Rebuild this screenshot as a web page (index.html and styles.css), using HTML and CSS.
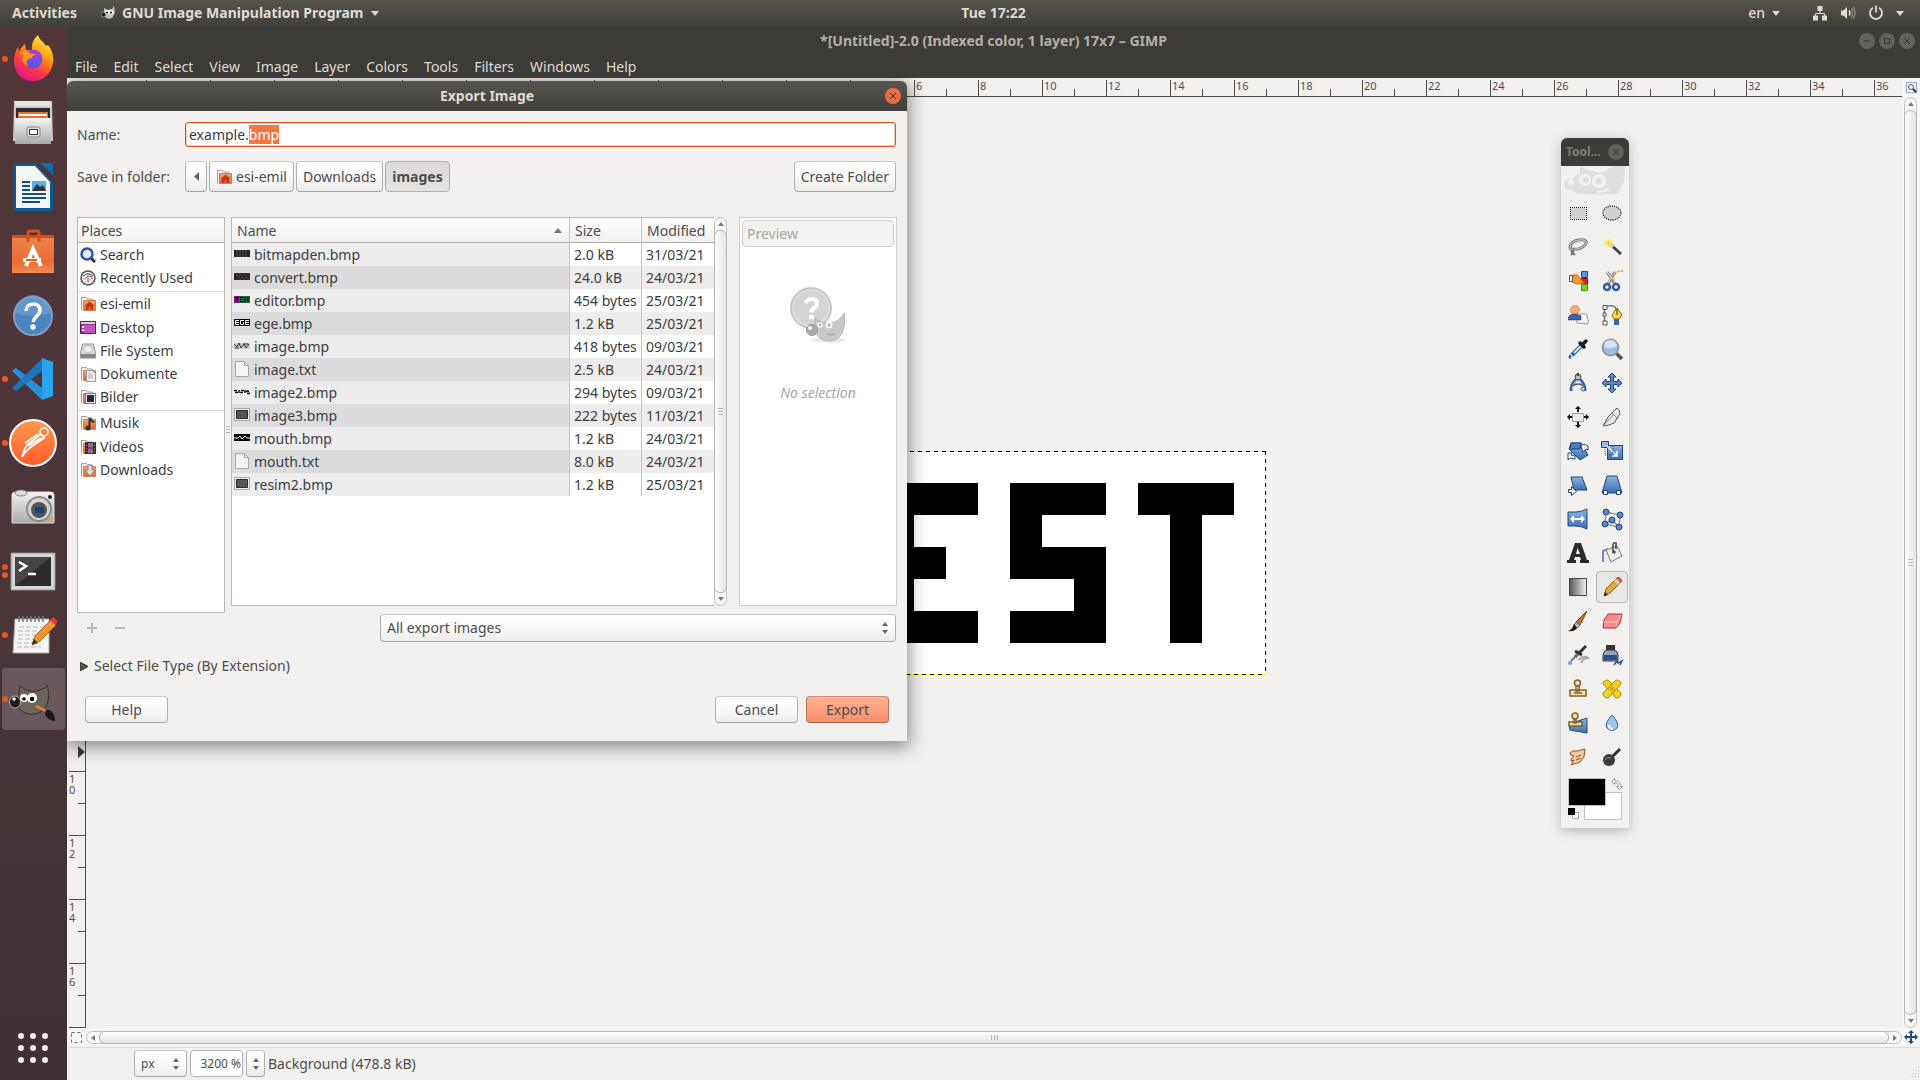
FILE: index.html
```html
<!DOCTYPE html>
<html lang="en">
<head>
<meta charset="utf-8">
<title>GIMP – Export Image</title>
<link rel="stylesheet" href="styles.css">
</head>
<body>
<svg class="defs" aria-hidden="true">
  <defs>
    <linearGradient id="blue" x1="0" y1="0" x2="0" y2="1"><stop offset="0" stop-color="#8fb4e0"/><stop offset="1" stop-color="#3c6db0"/></linearGradient>
    <linearGradient id="orange" x1="0" y1="0" x2="0" y2="1"><stop offset="0" stop-color="#f7a676"/><stop offset="1" stop-color="#e2611f"/></linearGradient>
    <linearGradient id="bag" x1="0" y1="0" x2="0" y2="1"><stop offset="0" stop-color="#e8884f"/><stop offset=".7" stop-color="#ee6b31"/><stop offset="1" stop-color="#f08a55"/></linearGradient>
    <linearGradient id="metal" x1="0" y1="0" x2="0" y2="1"><stop offset="0" stop-color="#f4f4f4"/><stop offset="1" stop-color="#a9a9a9"/></linearGradient>
    <linearGradient id="fade" x1="0" y1="0" x2="1" y2="0"><stop offset="0" stop-color="#555"/><stop offset="1" stop-color="#f4f4f4"/></linearGradient>
    <linearGradient id="fox" x1=".8" y1="0" x2=".3" y2="1"><stop offset="0" stop-color="#fff44f"/><stop offset=".4" stop-color="#ff980e"/><stop offset=".7" stop-color="#ff3647"/><stop offset="1" stop-color="#e31587"/></linearGradient>
    <linearGradient id="globe" x1=".5" y1="0" x2=".4" y2="1"><stop offset="0" stop-color="#b03be0"/><stop offset="1" stop-color="#4a5fe0"/></linearGradient>
    <linearGradient id="post" x1="0" y1="0" x2="0" y2="1"><stop offset="0" stop-color="#ff9a4d"/><stop offset="1" stop-color="#ff5a2a"/></linearGradient>
    <symbol id="folder" viewBox="0 0 16 16"><path d="M1.500 14.500v-13h5l1 1.500h5v3" fill="#f3f3f2" stroke="#a3a19e"/><path d="M3.500 4.500h12v10h-12z" fill="url(#orange)" stroke="#dc7a50"/></symbol>
    <symbol id="home" viewBox="0 0 16 16"><use href="#folder"/><path d="M9.500 5.500l-5 4.500h1.500v4h2.500v-2.500h2V14H13v-4h1.500z" fill="#bf3a14"/></symbol>
    <symbol id="sheet" viewBox="0 0 16 16"><path d="M1.500.5h9l4 4v11h-13z" fill="#f4f4f3" stroke="#a8a6a3"/><path d="M10.500.5v4h4z" fill="#fff" stroke="#a8a6a3"/></symbol>
    <symbol id="picture" viewBox="0 0 16 16"><path d="M.5 1.500h15v12H.5z" fill="#eee" stroke="#a8a6a3"/><path d="M2.500 3.500h11v8h-11z" fill="#555" stroke="#2b2b2b"/></symbol>
  </defs>
</svg>

<header class="topbar">
  <div class="topbar-left">
    <button class="plain">Activities</button>
    <button class="plain app-menu">
      <svg width="14" height="14" viewBox="0 0 14 14"><path d="M3 2l4 2 4-1 2-3 1 7-3 5q-5 2-8-2z" fill="#c4c3bd"/><circle cx="2.500" cy="8.500" r="2.500" fill="#222" stroke="#ddd" stroke-width=".5"/><circle cx="6" cy="6" r="2" fill="#fff"/><circle cx="10" cy="6" r="2.200" fill="#fff"/><circle cx="6" cy="6.500" r="1"/><circle cx="10" cy="6.500" r="1"/></svg>
      GNU Image Manipulation Program
      <i class="caret"></i>
    </button>
  </div>
  <time class="clock">Tue 17:22</time>
  <div class="topbar-right">
    <button class="plain lang">en <i class="caret"></i></button>
    <button class="plain status" aria-label="System menu">
      <svg width="16" height="16" viewBox="0 0 16 16"><path d="M5.500 1h5v5h-5zM1 10.500h5v5H1zM10 10.500h5v5h-5z" fill="#dfdbd2"/><path d="M8 5v3.500M3.500 11V8.500h9V11" stroke="#dfdbd2" fill="none"/></svg>
      <svg width="16" height="16" viewBox="0 0 16 16"><path d="M1 5.500h2.500L7 2v12l-3.500-3.500H1z" fill="#dfdbd2"/><path d="M9 5.500q2 2.500 0 5" stroke="#dfdbd2" stroke-width="1.500" fill="none"/><path d="M11 3.500q3.500 4.500 0 9M13 2q4 6 0 12" stroke="#85827b" stroke-width="1.500" fill="none"/></svg>
      <svg width="16" height="16" viewBox="0 0 16 16"><path d="M5 2.800a6 6 0 1 0 6 0M8 .5v7" stroke="#dfdbd2" stroke-width="1.800" fill="none"/></svg>
      <i class="caret"></i>
    </button>
  </div>
</header>

<div class="desktop">
<nav class="dock" aria-label="Dock">
  <button class="dock-item run1" aria-label="Firefox"><svg width="48" height="48" viewBox="0 0 48 48"><path d="M24 46C11 46 5 36 5 26c0-6 2-11 4-14l1 5c1-3 3-6 6-8l1 6 6 0C22 7 26 3 29 0c2 6 6 7 8 11l2-1c5 6 6 13 5 18-2 11-10 18-20 18z" fill="url(#fox)"/><circle cx="24" cy="24" r="9.500" fill="url(#globe)"/><path d="M11 18c3-3 8-2 11 1h6c-3 1-5 2-5 4-5 0-7 4-4 8-6-2-7-8-4-10z" fill="#ff9a1f"/></svg></button>
  <button class="dock-item" aria-label="Files"><svg width="48" height="48" viewBox="0 0 48 48"><path d="M5 2h38l1 40H4z" fill="#c9c9c8"/><path d="M6 2h36v5H6z" fill="#e6e6e5"/><path d="M7 9h34v14H7z" fill="#2e2b2a"/><path d="M9 13h30v8H9z" fill="#e8702f"/><path d="M10 15h28v2H10z" fill="#fff"/><path d="M6 19h36v26H6z" fill="url(#metal)"/><rect x="18" y="28" width="13" height="10" rx="2" fill="#ddd" stroke="#8b8b8b"/><path d="M20.500 30.500h8v5h-8z" fill="#fff" stroke="#333"/></svg></button>
  <button class="dock-item" aria-label="LibreOffice Writer"><svg width="48" height="48" viewBox="0 0 48 48"><path d="M42 48q2 0 2-2V20L26 0H8Q4 0 4 3v42q0 3 3 3z" fill="#0b5e93"/><path d="M7 3h19l15 16v26H7z" fill="#f4f4f3"/><path d="M13 19h8M13 23h8M13 27h8M13 31h24M13 35h24M13 39h18" stroke="#0d4f7d" stroke-width="2"/><path d="M23 18h14v10H23z" fill="#56b0e8"/><path d="M23 28l5-7 3 3 3-2 3 6z" fill="#333"/><path d="M31 0h11q2 0 2 2v10z" fill="#0a6fae"/></svg></button>
  <button class="dock-item" aria-label="Ubuntu Software"><svg width="48" height="48" viewBox="0 0 48 48"><path d="M3 8h42v38H3z" fill="url(#bag)"/><path d="M3 8h42v3H3z" fill="#d9491a"/><path d="M19 15V6q0-2 2-2h7q2 0 2 2v9" fill="none" stroke="#dc4c1d" stroke-width="3"/><path d="M17 39l7-17 8 17M14 33h18" stroke="#fff" stroke-width="4" fill="none"/><path d="M17 33h11" stroke="#e8601f" stroke-width="2"/></svg></button>
  <button class="dock-item" aria-label="Help"><svg width="48" height="48" viewBox="0 0 48 48"><circle cx="24" cy="25" r="19" fill="#4a86bd" stroke="#7f9fc4" stroke-width="2"/><path d="M6 22a18 18 0 0 1 36 0q-18 6-36 0z" fill="#75a3d6" opacity=".6"/><path d="M17 20c0-9 14-9 14-1 0 6-6 6-7 12" stroke="#fff" stroke-width="3.500" fill="none"/><circle cx="24" cy="36" r="2.700" fill="#fff"/></svg></button>
  <button class="dock-item run1" aria-label="Visual Studio Code"><svg width="48" height="48" viewBox="0 0 48 48"><path d="M3 16l4-3 26 20v12z" fill="#2a8fd6"/><path d="M3 33l4 3 26-20V4z" fill="#1c76b9"/><path d="M33 3l11 4v34l-11 4z" fill="#2ba4ee"/></svg></button>
  <button class="dock-item run1" aria-label="Postman"><svg width="48" height="48" viewBox="0 0 48 48"><circle cx="24" cy="24" r="23" fill="url(#post)" stroke="#fff" stroke-width="2"/><circle cx="35" cy="13" r="4" fill="none" stroke="#fff" stroke-width="1.500"/><path d="M18 26l14-11 3 4-13 9-5 4-4 6 2-7zM16 24l13-9M19 27l13-8" fill="none" stroke="#fff" stroke-width="1.800"/></svg></button>
  <button class="dock-item" aria-label="Shotwell"><svg width="48" height="48" viewBox="0 0 48 48"><path d="M3 12q0-3 3-3h36q3 0 3 3v28H3z" fill="url(#metal)" stroke="#ddd"/><ellipse cx="12" cy="10" rx="6" ry="3" fill="#ddd" stroke="#888"/><circle cx="30" cy="26" r="12" fill="#d5d5d5" stroke="#8a8a8a" stroke-width="2"/><circle cx="30" cy="27" r="8" fill="#555"/><path d="M26 24h9v6h-9z" fill="#153f86"/><circle cx="41" cy="14" r="2" fill="#222"/><path d="M39 34h4v3h-4z" fill="#e9a227"/></svg></button>
  <button class="dock-item run2" aria-label="Terminal"><svg width="48" height="48" viewBox="0 0 48 48"><path d="M2 6h44v37H2z" fill="#d6d6d4" stroke="#8f8f8c"/><path d="M6 10h36v29H6z" fill="#2c2c2b"/><path d="M6 39V10h36z" fill="#454544"/><path d="M10 15l7 4-7 5" stroke="#fff" stroke-width="2.500" fill="none"/><path d="M19 27h8" stroke="#fff" stroke-width="2.500"/></svg></button>
  <button class="dock-item run1" aria-label="Text Editor"><svg width="48" height="48" viewBox="0 0 48 48"><path d="M6 8h34v34H4z" fill="#f4f4f2" stroke="#aaa"/><path d="M10 5v6M14 5v6M18 5v6M22 5v6M26 5v6M30 5v6M34 5v6" stroke="#777" stroke-width="1.500"/><path d="M10 16h24M9 20h20M9 24h18M9 28h16M8 32h18M8 36h24" stroke="#b5b5b3" stroke-dasharray="5 2"/><path d="M23 34l3-9L42 9l5 5-16 16z" fill="#f0942d" stroke="#a8601a"/><path d="M23 34l2-6 4 4z" fill="#333"/><path d="M41 9l3-3 5 4-3 4z" fill="#dd3a3a"/></svg></button>
  <button class="dock-item run1 active" aria-label="GIMP"><svg width="48" height="48" viewBox="0 0 48 48"><path d="M11 11c6 5 13 7 20 4 4-1 6-3 7-5 4 12 1 29-15 29-9 0-13-4-14-10z" fill="#6b6658" stroke="#35322a"/><ellipse cx="6" cy="27" rx="5.500" ry="6" fill="#1b1b1b" stroke="#ddd" stroke-width=".7"/><circle cx="5" cy="24" r="1.800" fill="#fff"/><circle cx="15" cy="23" r="4" fill="#fff"/><circle cx="23" cy="23" r="5" fill="#fff"/><circle cx="15" cy="24" r="1.800"/><circle cx="23" cy="24" r="2.300"/><path d="M27 31l12 6" stroke="#d9822b" stroke-width="3"/><path d="M37 35c5-1 9 4 9 11-5 0-10-4-10-8z" fill="#171717"/></svg></button>
  <button class="dock-apps" aria-label="Show Applications"><svg width="30" height="30" viewBox="0 0 30 30" fill="#f2f1f0"><circle cx="3" cy="3" r="3"/><circle cx="15" cy="3" r="3"/><circle cx="27" cy="3" r="3"/><circle cx="3" cy="15" r="3"/><circle cx="15" cy="15" r="3"/><circle cx="27" cy="15" r="3"/><circle cx="3" cy="27" r="3"/><circle cx="15" cy="27" r="3"/><circle cx="27" cy="27" r="3"/></svg></button>
</nav>

<main class="gimp">
  <div class="titlebar">
    <h1 class="title">*[Untitled]-2.0 (Indexed color, 1 layer) 17x7 – GIMP</h1>
    <div class="winbtns">
      <button class="winbtn" aria-label="Minimize"><svg width="8" height="8"><path d="M1 4h6"/></svg></button>
      <button class="winbtn" aria-label="Maximize"><svg width="8" height="8"><path d="M1.500 1.500h5v5h-5z"/></svg></button>
      <button class="winbtn" aria-label="Close"><svg width="8" height="8"><path d="M1 1l6 6M7 1L1 7"/></svg></button>
    </div>
  </div>
  <nav class="menubar">
    <button class="plain">File</button><button class="plain">Edit</button><button class="plain">Select</button><button class="plain">View</button><button class="plain">Image</button><button class="plain">Layer</button><button class="plain">Colors</button><button class="plain">Tools</button><button class="plain">Filters</button><button class="plain">Windows</button><button class="plain">Help</button>
  </nav>

  <div class="editor">
    <div class="corner"></div>
    <div class="hruler"><span>6</span><span>8</span><span>10</span><span>12</span><span>14</span><span>16</span><span>18</span><span>20</span><span>22</span><span>24</span><span>26</span><span>28</span><span>30</span><span>32</span><span>34</span><span>36</span></div>
    <button class="corner-btn" aria-label="Zoom image when window size changes"><svg width="11" height="11" viewBox="0 0 11 11" fill="none"><path d="M.5.500h10v10H.5z" stroke="#2c5a96" stroke-dasharray="1 1"/><circle cx="5" cy="5" r="2.500" stroke="#555"/><path d="M7 7l3 3" stroke="#333" stroke-width="2"/></svg></button>
    <div class="vruler"><span>1<br>0</span><span>1<br>2</span><span>1<br>4</span><span>1<br>6</span><svg class="marker" width="7" height="12"><path d="M0 0l7 6-7 6z" fill="#3c3c3c"/></svg></div>
    <div class="canvas">
      <div class="image"><svg width="544" height="224" viewBox="0 0 17 7" shape-rendering="crispEdges"><path d="M0 0h17v7H0z" fill="#fff"/><path d="M1 1h3v1H3v4H2V2H1zM5 1h3v1H6v1h1v1H6v1h2v1H5zM9 1h3v1h-2v1h2v3H9V5h2V4H9zM13 1h3v1h-1v4h-1V2h-1z"/></svg></div>
    </div>
    <div class="scroll v"><i class="up"></i><div class="thumb"><b></b></div><i class="down"></i></div>
    <button class="corner-btn" aria-label="Toggle quick mask"><svg width="11" height="11"><path d="M.5.500h10v10H.5z" fill="none" stroke="#666" stroke-dasharray="3 3"/></svg></button>
    <div class="scroll h"><i class="left"></i><div class="thumb"><b></b></div><i class="right"></i></div>
    <button class="corner-btn" aria-label="Navigate image"><svg width="14" height="14" viewBox="0 0 14 14" fill="#204a87"><path d="M7 0l3 3H8v3h3V4l3 3-3 3V8H8v3h2l-3 3-3-3h2V8H3v2L0 7l3-3v2h3V3H4z"/></svg></button>
  </div>

  <footer class="statusbar">
    <div class="combo unit"><select aria-label="Unit"><option>px</option></select><svg class="updown" width="6" height="12"><path d="M0 4l3-4 3 4zM0 8l3 4 3-4z"/></svg></div>
    <input class="zoom" type="text" value="3200 %" aria-label="Zoom">
    <button class="btn spin" aria-label="Zoom steps"><svg width="6" height="12"><path d="M0 4l3-4 3 4zM0 8l3 4 3-4z"/></svg></button>
    <span>Background (478.8 kB)</span>
    <svg class="grip" width="12" height="12" fill="#bbb"><path d="M10 0h1v1h-1zM7 3h1v1H7zM10 3h1v1h-1zM4 6h1v1H4zM7 6h1v1H7zM10 6h1v1h-1zM1 9h1v1H1zM4 9h1v1H4zM7 9h1v1H7zM10 9h1v1h-1z"/></svg>
  </footer>

  <section class="dialog" role="dialog" aria-labelledby="dlg-title">
    <header class="dialog-title"><h2 id="dlg-title">Export Image</h2><button class="winbtn close" aria-label="Close"><svg width="8" height="8"><path d="M1 1l6 6M7 1L1 7"/></svg></button></header>
    <form class="dialog-body" onsubmit="return false">
      <div class="row">
        <label class="lbl" for="fname">Name:</label>
        <input id="fname" class="fname" type="text" value="example.bmp" autofocus>
      </div>
      <div class="row folder-row">
        <span class="lbl">Save in folder:</span>
        <div class="crumbs">
          <button type="button" class="btn back" aria-label="Back"><svg width="5" height="9"><path d="M5 0v9L0 4.500z" fill="#666"/></svg></button>
          <button type="button" class="btn"><svg width="16" height="16"><use href="#home"/></svg>esi-emil</button>
          <button type="button" class="btn">Downloads</button>
          <button type="button" class="btn pressed">images</button>
        </div>
        <button type="button" class="btn">Create Folder</button>
      </div>

      <div class="browser">
        <div class="side">
          <div class="places">
            <div class="head">Places</div>
            <ul>
              <li><svg width="16" height="16"><path d="M10 10l5 5" stroke="#333" stroke-width="3"/><circle cx="7" cy="7" r="5.500" fill="#e6eefa" stroke="#2f4fa8" stroke-width="2.500"/></svg>Search</li>
              <li><svg width="16" height="16" fill="none"><circle cx="8" cy="8" r="7" fill="#eee" stroke="#555" stroke-width="1.500"/><circle cx="8" cy="8" r="4.500" stroke="#999" stroke-dasharray="1 2"/><path d="M3 6q5-4 10 0M8 8v4" stroke="#555"/><path d="M5 9l3-3 4 1" stroke="#c33"/></svg>Recently Used</li>
              <li class="sep"><svg width="16" height="16"><use href="#home"/></svg>esi-emil</li>
              <li><svg width="16" height="16"><path d="M.5 1.500h15v12H.5z" fill="#a22fa0" stroke="#5c1a5a"/><path d="M4 5h11v8H4z" fill="#c055bd"/><path d="M1 2h14v2H1z" fill="#d8d4c0"/><path d="M2 6h2v2H2zM2 9h2v2H2z" fill="#fff"/></svg>Desktop</li>
              <li><svg width="16" height="16"><path d="M2.500 1h11l2 9v5H.5v-5z" fill="#d9d9d8" stroke="#999"/><ellipse cx="8" cy="6" rx="4.500" ry="3.500" fill="#eee" stroke="#bbb"/><path d="M1 11h14v4H1z" fill="#888"/></svg>File System</li>
              <li><svg width="16" height="16"><use href="#folder"/><path d="M6.500 4.500h6l3 3v8h-9z" fill="#eee" stroke="#999"/><path d="M8 8h4M8 10h5M8 12h5" stroke="#aaa"/></svg>Dokumente</li>
              <li><svg width="16" height="16"><use href="#folder"/><path d="M5.500 4.500h10v10h-10z" fill="#eee" stroke="#777"/><path d="M7 6h7v7H7z" fill="#2c2640"/></svg>Bilder</li>
              <li class="sep"><svg width="16" height="16"><use href="#folder"/><path d="M9.500 13V3q2 4 5 4" fill="none" stroke="#333" stroke-width="2"/><circle cx="8" cy="13" r="2.500" fill="#333"/></svg>Musik</li>
              <li><svg width="16" height="16"><use href="#folder"/><path d="M5 3h11v12H5z" fill="#352d38"/><path d="M8 4h5v4.500H8zM8 9.500h5V14H8z" fill="#8f6c9a"/><path d="M6.500 3v12M14.500 3v12" stroke="#c96a3c" stroke-dasharray="1 2"/></svg>Videos</li>
              <li><svg width="16" height="16"><use href="#folder"/><path d="M8 3h4v5h3l-5 6-5-6h3z" fill="#ddd" stroke="#888"/></svg>Downloads</li>
            </ul>
          </div>
          <div class="side-tools">
            <button type="button" class="plain" aria-label="Add bookmark"><svg width="10" height="10"><path d="M4 0h2v4h4v2H6v4H4V6H0V4h4z" fill="#b9b8b6"/></svg></button>
            <button type="button" class="plain" aria-label="Remove bookmark"><svg width="10" height="10"><path d="M0 4h10v2H0z" fill="#b9b8b6"/></svg></button>
          </div>
        </div>
        <div class="pane-grip"><b class="bars"></b></div>
        <div class="files">
          <div class="lists">
            <div class="table-box">
              <table>
                <thead><tr><th class="c-name">Name<svg width="8" height="5"><path d="M4 0l4 5H0z" fill="#777"/></svg></th><th class="c-size">Size</th><th class="c-mod">Modified</th></tr></thead>
                <tbody>
                  <tr><td><svg width="16" height="16"><path d="M0 4h16v7H0z" fill="#222"/><path d="M3 4v7M6 4v7M9 4v7M12 4v7" stroke="#555"/></svg>bitmapden.bmp</td><td>2.0 kB</td><td>31/03/21</td></tr>
                  <tr><td><svg width="16" height="16"><path d="M0 4h16v7H0z" fill="#2a2338"/><path d="M1 4l6 7M5 4l6 7M9 4l6 7" stroke="#6a3d2c"/></svg>convert.bmp</td><td>24.0 kB</td><td>24/03/21</td></tr>
                  <tr><td><svg width="16" height="16"><path d="M0 4h16v7H0z" fill="#1f6c42"/><path d="M0 4h5v7H0z" fill="#7a1580"/><path d="M1 5.500h4M3 5v4M6 5.500h3M6 7.500h2M6 9.500h3M11 5v5M13 5.500h2M14 5v5" stroke="#000"/></svg>editor.bmp</td><td>454 bytes</td><td>25/03/21</td></tr>
                  <tr><td><svg width="16" height="16" fill="none"><path d="M0 4h16v7H0z" fill="#000"/><path d="M5 5.500H1.500v4H5M2 7.500h3M10 5.500H6.500v4h3V7M15 5.500h-3.500v4H15M12 7.500h3" stroke="#fff"/></svg>ege.bmp</td><td>1.2 kB</td><td>25/03/21</td></tr>
                  <tr><td><svg width="16" height="16" fill="none"><path d="M0 5h16v6H0z" fill="#ccc"/><path d="M0 6l3 3 2-4 2 5 3-4 2 4 3-4M1 10h4M9 6h5" stroke="#333"/></svg>image.bmp</td><td>418 bytes</td><td>09/03/21</td></tr>
                  <tr><td><svg width="16" height="16"><use href="#sheet"/></svg>image.txt</td><td>2.5 kB</td><td>24/03/21</td></tr>
                  <tr><td><svg width="16" height="16" fill="none"><path d="M0 5h16v6H0z" fill="#fff"/><path d="M0 6.500h3M1 8.500h3M5 6v3M7 6.500h3M6 8.500h3M11 6v3M12 7.500h3M13 9.500h3M14 6v1" stroke="#111" stroke-width="1.500"/></svg>image2.bmp</td><td>294 bytes</td><td>09/03/21</td></tr>
                  <tr><td><svg width="16" height="16"><use href="#picture"/></svg>image3.bmp</td><td>222 bytes</td><td>11/03/21</td></tr>
                  <tr><td><svg width="16" height="16" fill="none"><path d="M0 4h16v7H0z" fill="#000"/><path d="M0 8h4l2-2 2 3 3-3 2 2h3" stroke="#fff"/></svg>mouth.bmp</td><td>1.2 kB</td><td>24/03/21</td></tr>
                  <tr><td><svg width="16" height="16"><use href="#sheet"/></svg>mouth.txt</td><td>8.0 kB</td><td>24/03/21</td></tr>
                  <tr><td><svg width="16" height="16"><use href="#picture"/></svg>resim2.bmp</td><td>1.2 kB</td><td>25/03/21</td></tr>
                </tbody>
              </table>
            </div>
            <div class="scroll v"><i class="up"></i><div class="thumb"><b></b></div><i class="down"></i></div>
            <div class="preview">
              <button type="button" class="btn" disabled>Preview</button>
              <svg width="56" height="56" viewBox="0 0 56 56"><ellipse cx="38" cy="53" rx="17" ry="3" fill="#000" opacity=".08"/><circle cx="21" cy="21" r="20" fill="#dcddde" stroke="#c6c7c8" stroke-width="2"/><circle cx="21" cy="21" r="17" fill="#d2d4d6"/><path d="M16 16q1-4 6-4 5 0 5 4.500 0 3-3 4.500-2.500 1.500-2.500 4.500" fill="none" stroke="#fff" stroke-width="4"/><path d="M19 28h5v4h-5z" fill="#fff"/><path d="M25 31q7 6 14 5 10 0 15-10c2 14-1 27-14 28-9 0-14-5-15-12z" fill="#c9c9c9" stroke="#b5b5b5"/><circle cx="22" cy="43" r="5.500" fill="#aaa" stroke="#999"/><circle cx="20" cy="41" r="2" fill="#f4f4f4"/><circle cx="30" cy="38" r="2.800" fill="#f6f6f6"/><circle cx="39" cy="38" r="3.500" fill="#f6f6f6"/><circle cx="30" cy="38" r="1.200" fill="#aaa"/><circle cx="39" cy="38" r="1.500" fill="#aaa"/><path d="M37 47q5 2 8 0" stroke="#999" fill="none"/></svg>
              <em>No selection</em>
            </div>
          </div>
          <div class="combo filter"><select aria-label="File filter"><option>All export images</option></select><svg class="updown" width="6" height="12"><path d="M0 4l3-4 3 4zM0 8l3 4 3-4z"/></svg></div>
        </div>
      </div>

      <button type="button" class="plain expander" aria-expanded="false"><svg width="8" height="9"><path d="M0 0l8 4.500L0 9z" fill="#555" stroke="#333"/></svg>Select File Type (By Extension)</button>
      <div class="actions">
        <button type="button" class="btn">Help</button>
        <button type="button" class="btn cancel">Cancel</button>
        <button type="submit" class="btn primary">Export</button>
      </div>
    </form>
  </section>

  <aside class="toolbox" aria-label="Toolbox">
    <header class="toolbox-title"><h2>Tool...</h2><button class="winbtn" aria-label="Close"><svg width="8" height="8"><path d="M1 1l6 6M7 1L1 7"/></svg></button></header>
    <svg width="68" height="28" viewBox="0 0 68 28"><path d="M19 0v8q-4 0-6 4-10 0-10 7 1 6 8 5 4 4 12 4h33q9-10 8-28h-13q-6 8-16 6-10-2-16-6z" fill="#dfdfde"/><circle cx="10" cy="16" r="3" fill="#f2f1f0"/><circle cx="24" cy="14" r="6" fill="#f2f1f0"/><circle cx="38" cy="15" r="7" fill="#f2f1f0"/><circle cx="25" cy="14" r="3" fill="#dfdfde"/><circle cx="38" cy="15" r="3.500" fill="#dfdfde"/><path d="M36 26q10 0 12-4" stroke="#f2f1f0" stroke-width="2" fill="none"/></svg>
    <div class="tools">
      <button aria-label="Rectangle Select"><svg viewBox="0 0 24 24" shape-rendering="crispEdges"><path d="M4.500 6.500h16v12h-16z" fill="#d0d2cd" stroke="#fff"/><path d="M4 6.500h17M4 18.500h17M4.500 6v13M20.500 6v13" fill="none" stroke="#111" stroke-dasharray="1 1"/></svg></button>
      <button aria-label="Ellipse Select"><svg viewBox="0 0 24 24"><ellipse cx="12" cy="12" rx="9" ry="7" fill="#d0d2cd" stroke="#fff"/><ellipse cx="12" cy="12" rx="9" ry="7" fill="none" stroke="#111" stroke-width="1.300" stroke-dasharray="1.200 1"/></svg></button>
      <button aria-label="Free Select"><svg viewBox="0 0 24 24" fill="none"><path d="M6 15c-4-3-1-9 7-10 7-1 9 2 6 5s-8 5-13 4" stroke="#777" stroke-width="3"/><path d="M6 15c-4-3-1-9 7-10 7-1 9 2 6 5s-8 5-13 4" stroke="#ddd"/><path d="M7 14q1 3-2 6M5 16l4 4" stroke="#777" stroke-width="2"/></svg></button>
      <button aria-label="Fuzzy Select"><svg viewBox="0 0 24 24"><circle cx="9" cy="8" r="5" fill="#fbf08a" opacity=".8"/><path d="M9 5v6M6 8h6" stroke="#e6cf1d"/><path d="M11 10l10 9" stroke="#444" stroke-width="3"/><path d="M11 10l2 2" stroke="#ddd" stroke-width="3"/></svg></button>
      <button aria-label="Select by Color"><svg viewBox="0 0 24 24"><path d="M15.500 2.500h6v6h-6z" fill="#5b94d6" stroke="#204a87"/><path d="M15.500 9.500h6v6h-6z" fill="#e02020" stroke="#900"/><path d="M15.500 15.500h6v6h-6z" fill="#7ad01f" stroke="#4e9a06"/><path d="M6 6h5l3 3 4 5-7 1-5-2z" fill="#f9972b" stroke="#c9600a"/><path d="M3.500 6.500h3v6h-3z" fill="#fff" stroke="#555"/></svg></button>
      <button aria-label="Scissors Select"><svg viewBox="0 0 24 24" fill="none"><path d="M8 15L15 3M15 15L7 3" stroke="#888" stroke-width="3"/><path d="M8 14L15 3M15 14L7 3" stroke="#eee"/><path d="M13 15V7q1-5 10-5" stroke="#d9932a" stroke-width="1.500" stroke-dasharray="2 1"/><circle cx="7" cy="18" r="3" stroke="#2f5da1" stroke-width="2.500"/><circle cx="16" cy="18" r="3" stroke="#2f5da1" stroke-width="2.500"/></svg></button>
      <button aria-label="Foreground Select"><svg viewBox="0 0 24 24"><path d="M11 20q-1-5 3-5l1-4q7-2 6 4 2 1 1 6z" fill="#f6f6f6" stroke="#999"/><circle cx="9" cy="7" r="4.500" fill="#f2b06b" stroke="#b3621a" stroke-dasharray="1 1"/><path d="M2.500 17v-3q1-3 6.500-3t6 3v3z" fill="#3b62a8" stroke="#4b145a" stroke-dasharray="1 1"/></svg></button>
      <button aria-label="Paths"><svg viewBox="0 0 24 24" fill="none"><path d="M4.500 4v16M5 4q10-4 12 4" stroke="#777" stroke-width="1.500"/><path d="M3 2.500h4v4H3zM3 10h3v3H3zM3 18h4v4H3z" fill="#fff" stroke="#555"/><path d="M17 5l5 7-3 4h-5l-2-4z" fill="#f7d84b" stroke="#8f6d00"/><path d="M17 6v6" stroke="#333"/><path d="M14 16h5v6h-5z" fill="#3465a4"/></svg></button>
      <button aria-label="Color Picker"><svg viewBox="0 0 24 24"><path d="M15 9L6 18" stroke="#2d5f9e" stroke-width="4"/><path d="M15 9l-7 7" stroke="#d6e4f5" stroke-width="2"/><path d="M14 6l4 4M16 8l4-4" stroke="#1c1c1c" stroke-width="3.500" stroke-linecap="round"/><path d="M4 17q-3 4 0 5 3-1 0-5z" fill="#3566a8"/></svg></button>
      <button aria-label="Zoom"><svg viewBox="0 0 24 24"><path d="M16 16l6 6" stroke="#555" stroke-width="3.500"/><circle cx="10.500" cy="10.500" r="8" fill="#9dbfe6" stroke="#989898" stroke-width="2"/><path d="M4 10q6 3 13-1-1-6-7-6t-6 7z" fill="#d3e2f4"/></svg></button>
      <button aria-label="Measure"><svg viewBox="0 0 24 24" fill="none"><path d="M11 8Q5 12 5 20M13 8q6 4 6 12" stroke="#2f5f9f" stroke-width="3"/><path d="M11 9Q6 13 6 18M13 9q5 4 5 9" stroke="#a9c4e6"/><path d="M6 15q6-4 12 0" stroke="#555" stroke-width="1.500"/><circle cx="12" cy="6" r="3" fill="#bbb" stroke="#444"/><circle cx="17" cy="18" r="2" fill="#ddd" stroke="#2f5f9f"/><path d="M12 2v3" stroke="#444" stroke-width="2"/></svg></button>
      <button aria-label="Move"><svg viewBox="0 0 24 24"><path d="M12 2l4 4h-2.500v4.500H18V8l4 4-4 4v-2.500h-4.500V18H16l-4 4-4-4h2.500v-4.500H6V16l-4-4 4-4v2.500h4.500V6H8z" fill="#5b87c3" stroke="#1d467f"/></svg></button>
      <button aria-label="Align"><svg viewBox="0 0 24 24"><path d="M6.500 8.500h11v8h-11z" fill="#eee" stroke="#999"/><path d="M12 1l3 3h-2v3h-2V4H9zM12 23l3-3h-2v-3h-2v3H9zM1 12l3-3v2h2v2H4v2zM23 12l-3-3v2h-2v2h2v2z"/></svg></button>
      <button aria-label="Crop"><svg viewBox="0 0 24 24"><path d="M3 21l5-9 9-9q3 2 3 6l-6 9-5 2z" fill="#e8e8e8" stroke="#555"/><path d="M3 21l10-11M12 8l5 5" stroke="#888" fill="none"/></svg></button>
      <button aria-label="Rotate"><svg viewBox="0 0 24 24"><path d="M5 4h10l7 12-8 5L3 10z" fill="url(#blue)" stroke="#1d467f"/><path d="M5 4l-1 6h10l1-6z" fill="#4a7ec0" stroke="#1d467f"/><path d="M15 7l3-2 4 2v4l-2-1-3 3zM2 14h4l-1 2 4 1v3l-5-1-2 2z" fill="#fff" stroke="#1d467f"/></svg></button>
      <button aria-label="Scale"><svg viewBox="0 0 24 24"><path d="M7.500 6.500h15v14h-15z" fill="url(#blue)" stroke="#1d467f"/><path d="M1.500 2.500h7v6h-7z" fill="#9cbce6" stroke="#1d467f"/><path d="M7 7l9 9M17 12v5h-5" fill="none" stroke="#fff" stroke-width="1.500"/><path d="M5 10v6h8V6" fill="none" stroke="#1d467f" stroke-dasharray="1 1"/></svg></button>
      <button aria-label="Shear"><svg viewBox="0 0 24 24"><path d="M5 4h11l5 13H8z" fill="url(#blue)" stroke="#1d467f"/><path d="M2.500 16.500h3v-3l5 5-5 4v-3h-3z" fill="#fff" stroke="#1d467f"/></svg></button>
      <button aria-label="Perspective"><svg viewBox="0 0 24 24"><path d="M7 3h10l5 17H2z" fill="url(#blue)" stroke="#1d467f"/><path d="M3.500 17.500h4v4h-4zM16.500 17.500h4v4h-4z" fill="#fff" stroke="#1d467f"/></svg></button>
      <button aria-label="Flip"><svg viewBox="0 0 24 24"><path d="M2 5h8q5 0 11-3v20q-6-3-11-3H2z" fill="url(#blue)" stroke="#1d467f"/><path d="M4 12l4-4v3h7V8l4 4-4 4v-3H8v3z" fill="#fff"/></svg></button>
      <button aria-label="Cage Transform"><svg viewBox="0 0 24 24"><path d="M6 5l14 3-1 12-14-3zM5 17l7-4 7 7" fill="none" stroke="#999" stroke-width="1.500"/><g fill="#5b87c3" stroke="#1d467f"><circle cx="6" cy="5" r="3"/><circle cx="20" cy="8" r="3"/><circle cx="12" cy="13" r="3"/><circle cx="5" cy="17" r="3"/><circle cx="19" cy="20" r="3"/></g></svg></button>
      <button aria-label="Text"><svg viewBox="0 0 24 24"><path d="M9 2h6l6 17h2v3h-9v-3h1l-1-3H9l-1 3h2v3H1v-3h2zM11.500 7L10 13h4z" fill="#2a2a2a"/></svg></button>
      <button aria-label="Bucket Fill"><svg viewBox="0 0 24 24"><path d="M3 21V10l5-2" fill="none" stroke="#6f86c9" stroke-width="2"/><path d="M6 9l11-4 5 10-11 6z" fill="#eee" stroke="#777"/><path d="M13 12V4q0-3 3-2v6" fill="none" stroke="#444" stroke-width="1.500"/><circle cx="14" cy="11" r="1.800" fill="#555"/></svg></button>
      <button aria-label="Blend"><svg viewBox="0 0 24 24"><path d="M3.500 3.500h17v17h-17z" fill="url(#fade)" stroke="#444"/></svg></button>
      <button class="on" aria-label="Pencil"><svg viewBox="0 0 24 24"><path d="M4 21l2-7L18 2l4 4L10 18z" fill="#e0a73a" stroke="#86591b"/><path d="M17 3l2-1 3 3-1 2z" fill="#e23b3b"/><path d="M15 5l4 4" stroke="#ddd" stroke-width="2"/><path d="M4 21l1-4 3 3z" fill="#222"/></svg></button>
      <button aria-label="Paintbrush"><svg viewBox="0 0 24 24"><path d="M21 2l-7 14-4-3z" fill="#c9752c" stroke="#6b3b12"/><path d="M10 13l4 3-3 3-3-3z" fill="#bbb" stroke="#666"/><path d="M8 15l3 4q-3 4-9 3 4-1 6-7z" fill="#1b1b1b"/></svg></button>
      <button aria-label="Eraser"><svg viewBox="0 0 24 24"><path d="M8 5h14l-2 9-4 5H3l1-8z" fill="#f58a8a" stroke="#c02a2a"/><path d="M4 13h13l4-7M17 13l-1 5" fill="none" stroke="#fbc4c4"/></svg></button>
      <button aria-label="Airbrush"><svg viewBox="0 0 24 24"><path d="M20 3L9 14M9 8l7 4" stroke="#333" stroke-width="3"/><path d="M12 11l-7 7" stroke="#777" stroke-width="2"/><path d="M12 17q6-5 10-2-5 0-7 5" fill="none" stroke="#aaa" stroke-width="2"/><circle cx="4" cy="20" r="2" fill="#6a9be0"/></svg></button>
      <button aria-label="Ink"><svg viewBox="0 0 24 24"><path d="M6 2h9v5H6z" fill="#333"/><path d="M3 12q0-4 4-5h7q4 1 4 5v6H3z" fill="#8fa5c6" stroke="#333"/><path d="M4 12h13v5H4z" fill="#2a4f8c"/><path d="M14 22l3-4 1 2 4-2-2 4" fill="none" stroke="#2a4f8c" stroke-width="1.500"/></svg></button>
      <button aria-label="Clone"><svg viewBox="0 0 24 24" fill="#f2e0b0" stroke="#80642a" stroke-width="1.500"><circle cx="11.500" cy="6" r="3"/><path d="M10 9h3v5h-3zM4 13h16v6H4z"/><path d="M8 16h8"/></svg></button>
      <button aria-label="Heal"><svg viewBox="0 0 24 24" fill="#f2d024" stroke="#b08d00" stroke-linejoin="round"><path d="M3 7q0-4 5-4l13 13q0 5-5 5z"/><path d="M21 7q0-4-5-4L3 16q0 5 5 5z"/><path d="M8 12h8M12 8v8M10 10l4 4M14 10l-4 4" stroke-dasharray="1 1"/></svg></button>
      <button aria-label="Perspective Clone"><svg viewBox="0 0 24 24"><path d="M3 13l18-6v15L4 19z" fill="url(#blue)" stroke="#1d467f"/><g fill="#f2e0b0" stroke="#80642a" stroke-width="1.500"><circle cx="9" cy="5" r="3"/><path d="M8 8h2v4H8zM3 11h13v4H3z"/></g></svg></button>
      <button aria-label="Blur / Sharpen"><svg viewBox="0 0 24 24"><path d="M12 4q8 9 5 13-5 5-10 0-3-4 5-13z" fill="#a3c6ec" stroke="#35669f"/><path d="M9 14q0 4 4 4" fill="none" stroke="#fff" stroke-width="2"/></svg></button>
      <button aria-label="Smudge"><svg viewBox="0 0 24 24"><path d="M4 8q2-3 7-2l8-2-1 8-4 5-9 3 3-5-3 1q-1-3 3-5l-3-1z" fill="#f1c9a4" stroke="#8f5020"/><path d="M10 12l5-2M10 15l5-2" stroke="#8f5020"/></svg></button>
      <button aria-label="Dodge / Burn"><svg viewBox="0 0 24 24"><path d="M10 14L20 4" stroke="#333" stroke-width="3"/><circle cx="9" cy="15" r="6" fill="#3a3a3a"/><path d="M5 15q2-4 6-2" stroke="#888" fill="none"/></svg></button>
    </div>
    <div class="colors"><i class="bg"></i><i class="fg"></i><svg class="swap" width="14" height="14" fill="none"><path d="M1.500 4.500l3-3v2q6 0 6 6h2l-3 3-3-3h2q0-4-4-4v2z" fill="#fff" stroke="#999"/></svg><svg class="reset" width="12" height="12"><path d="M4.500 4.500h6v6h-6z" fill="#fff" stroke="#aaa"/><path d="M0 0h7v7H0z"/></svg></div>
  </aside>
</main>
</div>
<script src="script.js"></script>
</body>
</html>
```
FILE: styles.css
```css
* { box-sizing: border-box; }
html, body { height: 100%; margin: 0; }
body {
  display: flex; flex-direction: column; overflow: hidden;
  font: 14px/20px "Noto Sans", "Open Sans", sans-serif; color: #4c4c4c; background: #3c3b37;
}
.defs { position: absolute; width: 0; height: 0; }
svg { display: block; flex: none; }
h1, h2 { margin: 0; font-size: 14px; line-height: 20px; font-weight: 700; }
button, input, select { font: inherit; color: inherit; margin: 0; }
button { padding: 0; }
.plain { border: 0; background: none; display: flex; align-items: center; }

/* top panel */
.topbar {
  display: grid; grid-template-columns: 67px minmax(0, 1fr) auto minmax(0, 1fr);
  align-items: center; height: 27px; padding-bottom: 1px; flex: none; color: #dfdbd2; font-weight: 700;
  background: linear-gradient(#57544b, #3f3e39);
}
.topbar-left { grid-column: 1 / 3; display: flex; gap: 24px; padding-left: 12px; }
.app-menu { gap: 7px; }
.topbar-right { display: flex; justify-content: flex-end; padding-right: 16px; gap: 32px; }
.lang { font-weight: 500; gap: 7px; }
.status { gap: 12px; }
.caret { border: 4px solid transparent; border-top: 5px solid #dfdbd2; border-bottom: 0; }

.desktop { flex: 1; display: flex; min-height: 0; }

/* dock */
.dock { width: 67px; flex: none; display: flex; flex-direction: column; background: linear-gradient(#533639, #4b3539 50%, #403134); }
.dock-item {
  position: relative; height: 64px; padding-right: 2px; border: 1px solid transparent; border-width: 1px 2px; border-radius: 5px;
  background: none; display: grid; place-items: center;
}
.dock-item.active { background-color: #6a575b; background-clip: padding-box; }
.run1::before, .run2::before {
  content: ""; position: absolute; left: 0; top: 50%; width: 6px; height: 6px; border-radius: 50%; margin-top: -3px; background: #e95420;
}
.run2::before { margin-top: -7px; box-shadow: 0 8px #e95420; }
.dock-apps { margin-top: auto; border: 0; background: none; padding: 17px 18px; }

/* image window */
.gimp { position: relative; flex: 1; min-width: 0; display: flex; flex-direction: column; background: #f2f1f0; }
.titlebar { display: grid; grid-template-columns: minmax(0, 1fr) auto minmax(0, 1fr); align-items: center; height: 29px; padding-bottom: 1px; background: #3c3b37; color: #b3b0a8; }
.title { grid-column: 2; }
.winbtns { display: flex; gap: 4px; justify-content: flex-end; padding-right: 5px; }
.winbtn { width: 16px; height: 16px; border: 0; border-radius: 50%; background: #62615c; display: grid; place-items: center; }
.winbtn path { stroke: #35342f; fill: none; }
.winbtn.close { background: #ee6a42; }
.menubar { display: flex; gap: 16px; height: 22px; padding: 0 8px; background: #3c3b37; color: #dfdbd2; }

.editor { flex: 1; min-height: 0; display: grid; grid-template: 19px minmax(0, 1fr) 18px / 19px minmax(0, 1fr) 18px; background: #f6f6f5; }
.corner { background: #f2f1f0; }
.corner-btn { border: 0; background: none; display: grid; place-items: center; }
.hruler {
  display: flex; padding: 1px 0 0 830px; overflow: hidden; border-bottom: 1px solid #4c4c4c; font-size: 11px; line-height: 14px;
  background:
    repeating-linear-gradient(90deg, #4c4c4c 0 1px, transparent 1px 64px) 60px 2px / 100% 100% no-repeat,
    repeating-linear-gradient(90deg, #4c4c4c 0 1px, transparent 1px 32px) 28px 11px / 100% 100% no-repeat,
    #f2f1f0;
}
.hruler span { width: 64px; flex: none; }
.vruler {
  position: relative; display: flex; flex-direction: column; padding: 676px 0 0 2px; border-right: 1px solid #4c4c4c; overflow: hidden;
  font-size: 11px; line-height: 11px;
  background:
    repeating-linear-gradient(#4c4c4c 0 1px, transparent 1px 64px) 2px 34px / 100% 100% no-repeat,
    repeating-linear-gradient(#4c4c4c 0 1px, transparent 1px 32px) 11px 2px / 100% 100% no-repeat,
    #f2f1f0;
}
.vruler span { height: 64px; flex: none; }
.marker { position: absolute; right: 0; top: 649px; }
.canvas { position: relative; overflow: hidden; background: #f2f1f0; }
.image { position: absolute; left: 636px; top: 354px; }
.image::after {
  content: ""; position: absolute; inset: 0;
  background:
    repeating-linear-gradient(90deg, #ff0 0 4px, #000 4px 8px) 0 0 / 100% 1px no-repeat,
    repeating-linear-gradient(90deg, #000 0 4px, #ff0 4px 8px) 0 100% / 100% 1px no-repeat,
    repeating-linear-gradient(#000 0 4px, #ff0 4px 8px) 100% 0 / 1px 100% no-repeat;
}

.scroll { display: flex; border: 1px solid #c3c1bf; border-radius: 7px; background: #f8f8f7; align-items: center; }
.scroll.v { flex-direction: column; width: 13px; }
.editor .scroll.v { margin: 0 2px; }
.scroll.h { height: 13px; margin: 3px 0 0; }
.scroll i { flex: none; border: 3px solid transparent; }
.scroll .up { border-bottom: 4px solid #777; border-top: 0; margin: 4px 0; }
.scroll .down { border-top: 4px solid #777; border-bottom: 0; margin: 4px 0; }
.scroll .left { border-right: 4px solid #777; border-left: 0; margin: 0 4px; }
.scroll .right { border-left: 4px solid #777; border-right: 0; margin: 0 4px; }
.thumb { flex: 1; border: 1px solid #b5b3b0; border-radius: 6px; display: grid; place-items: center; }
.v .thumb { width: 13px; margin: 0 -1px; background: linear-gradient(90deg, #fefefe, #e4e4e3); }
.h .thumb { height: 13px; background: linear-gradient(#fefefe, #e4e4e3); }
.thumb b { width: 5px; height: 7px; background: repeating-linear-gradient(#b5b3b0 0 1px, transparent 1px 3px); }
.h .thumb b { width: 7px; height: 5px; background: repeating-linear-gradient(90deg, #b5b3b0 0 1px, transparent 1px 3px); }

.statusbar { display: flex; align-items: center; gap: 3px; height: 33px; margin-top: 1px; padding: 0 0 1px 67px; border-top: 1px solid #dcdbd9; }
.combo { position: relative; }
.combo select {
  appearance: none; width: 100%; height: 100%; padding: 0 6px; border: 1px solid; border-color: #c9c7c4 #b3b1ae #a5a3a0; border-radius: 4px;
  background: linear-gradient(#fff, #fafafa 50%, #ececeb);
}
.updown { position: absolute; right: 8px; top: 50%; margin-top: -6px; pointer-events: none; fill: #666; }
.unit { width: 53px; height: 27px; font-size: 12px; }
.zoom { width: 53px; height: 27px; border: 1px solid #b3b1ae; border-radius: 4px; background: #fff; text-align: right; padding: 0 1px; font-size: 12px; }
.spin { width: 19px; fill: #666; }
.grip { align-self: flex-end; margin-left: auto; }

.btn {
  display: flex; align-items: center; justify-content: center; gap: 4px; height: 27px; padding: 0 5px;
  border: 1px solid; border-color: #c9c7c4 #b3b1ae #a5a3a0; border-radius: 4px; background: linear-gradient(#fff, #fafafa 50%, #ebebea);
}
.btn.pressed { font-weight: 700; background: linear-gradient(#dad9d7, #e5e4e2); border-color: #b0aeab; padding: 0 4px; }
.btn.primary { background: linear-gradient(#ffb193, #f98f68); border-color: #cf8d75 #b9735b #a8654e; }

/* export dialog */
.dialog { position: absolute; left: 0; top: 54px; width: 840px; background: #f2f1f0; border-radius: 6px 6px 0 0; box-shadow: 0 4px 18px 2px rgba(0, 0, 0, .45); clip-path: inset(-3px -40px -40px 0); }
.dialog-title { display: grid; grid-template-columns: 1fr auto 1fr; align-items: center; height: 30px; padding: 0 6px; border-radius: 6px 6px 0 0; background: linear-gradient(#58564d, #3f3e39); color: #dfdbd2; }
.dialog-title h2 { grid-column: 2; }
.dialog-title .winbtn { justify-self: end; }
.dialog-body { display: flex; flex-direction: column; padding: 11px 10px 18px; }
.row { display: flex; align-items: center; }
.lbl { width: 108px; flex: none; }
.fname { flex: 1; height: 25px; padding: 0 3px; border: 1px solid #d6541f; border-radius: 3px; background: #fff; color: #3c3c3c; outline: 0; box-shadow: inset 0 0 0 1px #f9c9b5; margin-right: 1px; }
.fname::selection { background: #f07746; color: #fff; }
.folder-row { margin-top: 14px; padding-right: 1px; }
.folder-row .btn { height: 31px; padding: 0 6px; }
.crumbs { display: flex; gap: 2px; flex: 1; }
.crumbs .back { width: 22px; }
.browser { display: flex; margin-top: 25px; }
.side { width: 148px; flex: none; }
.places { height: 396px; border: 1px solid #b9b7b4; background: #fff; color: #3c3c3c; }
.head { height: 25px; padding: 3px 3px 0; border-bottom: 1px solid #b0aca5; background: linear-gradient(#fff, #f0f0ef); color: #4c4c4c; }
.places ul { list-style: none; margin: 0; padding: 0; }
.places li { display: flex; align-items: center; gap: 4px; height: 23px; padding-left: 2px; }
.places .sep { margin-top: 2px; border-top: 1px solid #dddcdb; height: 25px; }
.side-tools { display: flex; gap: 18px; padding: 10px 10px 0; }
.pane-grip { width: 6px; display: grid; place-items: center; }
.bars { width: 4px; height: 7px; background: repeating-linear-gradient(#b5b3b0 0 1px, transparent 1px 3px); }
.files { flex: 1; min-width: 0; }
.lists { display: flex; height: 389px; }
.table-box { flex: 1; border: 1px solid #b9b7b4; border-right-width: 0; background: #fff; }
table { width: 100%; border-collapse: separate; border-spacing: 0; table-layout: fixed; color: #3c3c3c; }
th { height: 25px; padding: 2px 5px 0; font-weight: 400; text-align: left; border-bottom: 1px solid #b0aca5; background: linear-gradient(#fff, #f0f0ef); color: #4c4c4c; }
th svg { float: right; margin: 7px 2px 0; }
td { height: 23px; padding: 0 0 0 4px; white-space: nowrap; }
th + th, td + td { border-left: 1px solid #c6c5c3; }
td:first-child { padding-left: 2px; background: #ededed; }
td svg { display: inline-block; vertical-align: -2px; margin-right: 4px; }
tr:nth-child(even) td { background: #ededed; }
tr:nth-child(even) td:first-child { background: #dcdcdc; }
.c-size { width: 72px; }
.c-mod { width: 73px; }
.preview { width: 158px; margin-left: 12px; padding: 2px; border: 1px solid #cfcdca; background: #fff; display: flex; flex-direction: column; align-items: center; color: #a6a5a3; }
.preview .btn { width: 100%; justify-content: flex-start; padding: 0 4px; color: #a6a5a3; border-color: #d3d2d0; background: #f2f2f1; }
.preview svg { margin: 40px 0; }
.filter { width: 516px; height: 28px; margin: 8px 1px 0 auto; }
.expander { align-self: flex-start; gap: 6px; margin: 14px 0 0 3px; }
.actions { display: flex; gap: 8px; padding: 20px 8px 0; }
.actions .btn { width: 83px; }
.cancel { margin-left: auto; }

/* toolbox */
.toolbox { position: absolute; right: 291px; top: 111px; width: 68px; height: 690px; background: #f2f1f0; border-radius: 6px 6px 0 0; box-shadow: 0 3px 12px rgba(0, 0, 0, .25); }
.toolbox-title { display: flex; align-items: center; justify-content: space-between; height: 28px; padding: 0 5px; border-radius: 6px 6px 0 0; background: #3c3b37; color: #807d78; }
.toolbox-title h2 { font-size: 12px; }
.tools { display: grid; grid-template-columns: 34px 34px; padding-top: 2px; }
.tools button { height: 34px; border: 1px solid transparent; border-radius: 4px; background: none; display: grid; place-items: center; }
.tools svg { width: 24px; height: 24px; }
.tools .on { height: 32px; margin: 1px; border-color: #b9b7b4; background: #e9e8e7; }
.colors { position: relative; height: 50px; margin-top: 2px; }
.fg, .bg { position: absolute; width: 38px; height: 28px; border: 1px solid #c3c1bf; }
.fg { left: 7px; top: 2px; background: #000; }
.bg { left: 23px; top: 16px; background: #fff; }
.swap { position: absolute; left: 49px; top: 1px; }
.reset { position: absolute; left: 7px; top: 32px; }
```
FILE: script.js
```js
const field = document.getElementById('fname');
field.focus();
field.setSelectionRange(field.value.lastIndexOf('.') + 1, field.value.length);
```
